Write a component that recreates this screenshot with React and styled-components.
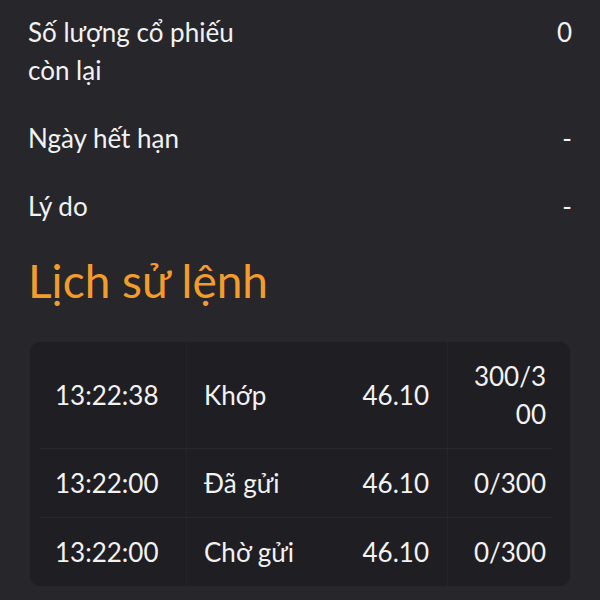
import styled, { createGlobalStyle } from "styled-components";

const GlobalStyle = createGlobalStyle`
  body {
    margin: 0;
    background: #27262b;
    color: #f2f2f2;
    font-family: Lato, "Noto Sans", sans-serif;
  }
`;

const details = [
  { label: "Số lượng cổ phiếu còn lại", value: "0" },
  { label: "Ngày hết hạn", value: "-" },
  { label: "Lý do", value: "-" },
];

const history = [
  { time: "13:22:38", status: "Khớp", price: "46.10", qty: "300/300" },
  { time: "13:22:00", status: "Đã gửi", price: "46.10", qty: "0/300" },
  { time: "13:22:00", status: "Chờ gửi", price: "46.10", qty: "0/300" },
];

const App = () => {
  return (
    <PageDiv>
      <GlobalStyle />
      {details.map((item) => (
        <InfoRow key={item.label}>
          <LabelDiv>{item.label}</LabelDiv>
          <ValueDiv>{item.value}</ValueDiv>
        </InfoRow>
      ))}
      <Title>Lịch sử lệnh</Title>
      <CardDiv>
        {history.map((row, i) => (
          <RowDiv key={i} $last={i === history.length - 1}>
            <Cell $divider $pl={15}>
              {row.time}
            </Cell>
            <Cell $pl={17}>{row.status}</Cell>
            <Cell $divider $right $pr={18}>
              {row.price}
            </Cell>
            <Cell $right $pl={20} $pr={6} $breakAll>
              {row.qty}
            </Cell>
          </RowDiv>
        ))}
      </CardDiv>
    </PageDiv>
  );
};

const PageDiv = styled.div`
  min-height: 100vh;
  box-sizing: border-box;
  padding: 13px 28px 0;
`;
const InfoRow = styled.div`
  display: flex;
  justify-content: space-between;
  align-items: flex-start;
  font-size: 26px;
  line-height: 38px;
  margin-bottom: 30px;
`;
const LabelDiv = styled.div`
  max-width: 245px;
`;
const ValueDiv = styled.div`
  text-align: right;
`;
const Title = styled.h2`
  margin: 0 0 35px;
  font-size: 46px;
  line-height: 52px;
  font-weight: 400;
  color: #f39c2c;
`;
const CardDiv = styled.div`
  margin: 0 2px;
  padding: 0 18px 0 10px;
  background: #1f1e23;
  border-radius: 10px;
`;
const RowDiv = styled.div`
  display: grid;
  grid-template-columns: 147px 1fr 118px 104px;
  border-bottom: ${(p) => (p.$last ? "none" : "1px solid #29282d")};
`;
const Cell = styled.div`
  display: flex;
  align-items: center;
  justify-content: ${(p) => (p.$right ? "flex-end" : "flex-start")};
  text-align: ${(p) => (p.$right ? "right" : "left")};
  padding: 15px ${(p) => p.$pr || 0}px 15px ${(p) => p.$pl || 0}px;
  font-size: 26px;
  line-height: 38px;
  word-break: ${(p) => (p.$breakAll ? "break-all" : "normal")};
  border-right: ${(p) => (p.$divider ? "1px solid #252429" : "none")};
`;

export default App;
